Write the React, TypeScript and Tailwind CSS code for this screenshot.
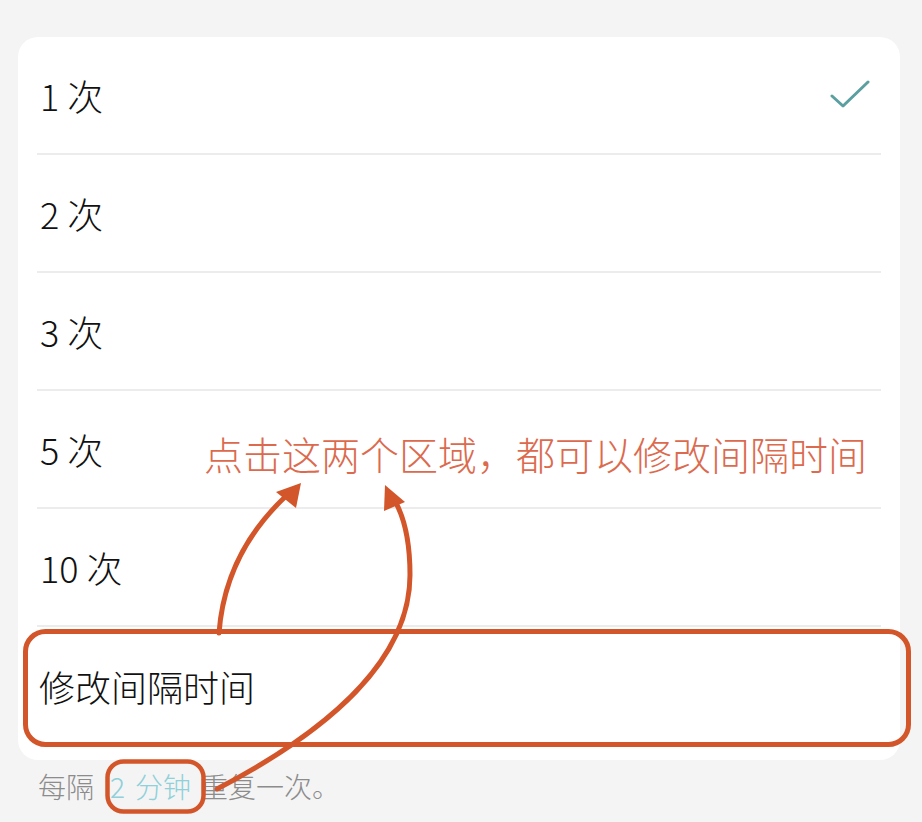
import React from 'react';

const options = ['1 次', '2 次', '3 次', '5 次', '10 次'];

const font = { fontFamily: '"Noto Sans CJK SC", "Noto Sans", sans-serif' };

const CheckIcon: React.FC = () => (
  <svg width="40" height="30" viewBox="0 0 40 30" fill="none">
    <path d="M2 16 L13 26 L38 2" stroke="#5b9fa0" strokeWidth="3" strokeLinecap="round" strokeLinejoin="round" />
  </svg>
);

const App: React.FC = () => {
  const selected = 0;

  return (
    <div className="relative w-[922px] h-[822px] overflow-hidden bg-[#f4f4f4] pt-[37px] pl-[18px] pr-[22px] font-light" style={font}>
      {/* List card */}
      <div className="bg-white rounded-[20px] pb-[15px]">
        <div className="mx-[19px]">
          {options.map((label, i) => (
            <div
              key={label}
              className="h-[118px] flex items-center justify-between pl-[3px] pr-[11px] border-b-2 border-[#ececec] text-[36px] text-[#111]"
            >
              <span>{label}</span>
              {i === selected && <CheckIcon />}
            </div>
          ))}
          <div className="h-[118px] flex items-center pl-[2px] text-[36px] text-[#111]">修改间隔时间</div>
        </div>
      </div>

      {/* Footer hint */}
      <div className="mt-[8px] pl-[20px] leading-[36px] text-[28px] text-[#8c8c8c] flex">
        <span>每隔</span>
        <span className="ml-[16px] text-[#8fd0d9]">2</span>
        <span className="ml-[10px] text-[#8fd0d9]">分钟</span>
        <span className="ml-[9px]">重复一次。</span>
      </div>

      {/* Annotation text */}
      <div className="absolute left-[204px] top-[434px] text-[39px] leading-none text-[#dc6a4e]">
        点击这两个区域，都可以修改间隔时间
      </div>

      {/* Annotation shapes */}
      <svg className="absolute left-0 top-0 pointer-events-none" width="922" height="822" viewBox="0 0 922 822" fill="none">
        <rect x="25.5" y="631.5" width="883" height="113" rx="20" stroke="#d3562a" strokeWidth="5" />
        <rect x="107.5" y="761.5" width="96" height="50" rx="16" stroke="#d3562a" strokeWidth="4.5" />
        <path d="M219 633 C223 580 245 535 285 497" stroke="#d3562a" strokeWidth="5" strokeLinecap="round" />
        <polygon points="301,483 276,492 296,508" fill="#d3562a" />
        <path d="M217 789 C330 730 410 660 410 575 C410 545 405 520 396 503" stroke="#d3562a" strokeWidth="5" strokeLinecap="round" />
        <polygon points="385,485 384,511 405,502" fill="#d3562a" />
      </svg>
    </div>
  );
};

export default App;
